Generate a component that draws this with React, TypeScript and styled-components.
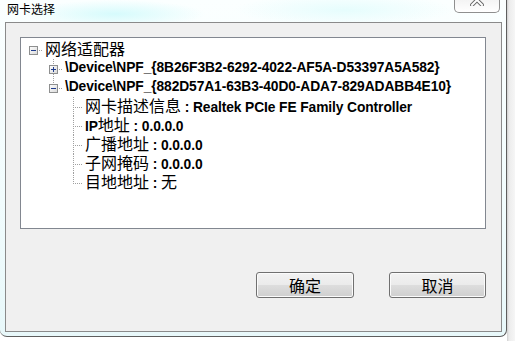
import styled, { createGlobalStyle } from "styled-components";

const GlobalStyle = createGlobalStyle`
  html, body {
    margin: 0;
    padding: 0;
    background: #ffffff;
  }
  body {
    width: 515px;
    height: 341px;
    overflow: hidden;
    font-family: "Liberation Sans", "Noto Sans CJK SC", sans-serif;
  }
`;

const Screen = styled.div`
  display: flex;
  width: 515px;
  height: 341px;
  align-items: flex-start;
`;

const Window = styled.div`
  display: flex;
  flex-direction: column;
  width: 506px;
  height: 336px;
  flex-shrink: 0;
  border-right: 1px solid #5e5e5e;
  border-bottom: 1px solid #5e5e5e;
  border-radius: 0 0 7px 7px;
  background:
    radial-gradient(ellipse 90px 14px at 115px 14px, #d6fbfc 0%, rgba(214, 251, 252, 0) 100%),
    radial-gradient(ellipse 110px 16px at 345px 10px, #e6fdfd 0%, rgba(230, 253, 253, 0) 100%),
    linear-gradient(180deg, #fbffff 0%, #f1fcfd 60%, #e8f8fa 100%);
`;

const BackStrip = styled.div`
  flex: 1;
  height: 341px;
  background: linear-gradient(90deg, #cfcfcf 0px, #ececec 2px, #f6f6f6 100%);
`;

const TitleBar = styled.div`
  display: flex;
  justify-content: space-between;
  align-items: flex-start;
  height: 22px;
  padding: 0 6px 0 7px;
`;

const Title = styled.span`
  font-family: "Noto Sans CJK SC", sans-serif;
  font-size: 12px;
  line-height: 14px;
  padding-top: 2px;
  color: #000000;
`;

const CloseButton = styled.div`
  display: flex;
  justify-content: center;
  align-items: flex-start;
  width: 44px;
  height: 12px;
  overflow: hidden;
  border: 1px solid #8f8f8f;
  border-top: none;
  border-radius: 0 0 5px 5px;
  background: linear-gradient(180deg, #f4f4f4 0%, #ffffff 100%);
  box-shadow: inset 0 -1px 0 #ffffff;
`;

const Client = styled.div`
  display: flex;
  flex-direction: column;
  margin: 0 4px 0 5px;
  height: 310px;
  box-sizing: border-box;
  border: 1px solid #8a8a8a;
  background: #f0f0f0;
  padding: 14px 14px 0 14px;
`;

const TreeBox = styled.div`
  display: flex;
  flex-direction: column;
  width: 466px;
  height: 192px;
  box-sizing: border-box;
  border: 1px solid #828790;
  background: #ffffff;
  padding: 2px 0 0 2px;
`;

const Row = styled.div`
  display: flex;
  align-items: center;
  height: 19px;
`;

const CellSvg = styled.svg`
  display: block;
  width: 20px;
  height: 19px;
  flex-shrink: 0;
  align-self: stretch;
`;

const Label = styled.span`
  display: flex;
  align-items: baseline;
  margin-left: 2px;
  margin-bottom: 2px;
  height: 17px;
  line-height: 17px;
  white-space: pre;
  color: #000000;
`;

const Cjk = styled.span`
  font-family: "Noto Sans CJK SC", sans-serif;
  font-size: 16px;
  font-weight: 400;
  line-height: 17px;
`;

const Latin = styled.span`
  font-family: "Liberation Sans", Arial, sans-serif;
  font-size: 13.8px;
  font-weight: 700;
  letter-spacing: -0.1px;
  line-height: 17px;
`;

const ButtonRow = styled.div`
  display: flex;
  justify-content: flex-end;
  gap: 35px;
  margin-top: 43px;
  padding-right: 1px;
`;

const Button = styled.button<{ $w: number }>`
  width: ${(p) => p.$w}px;
  height: 26px;
  padding: 0;
  border: 1px solid #707070;
  border-radius: 3px;
  background: linear-gradient(180deg, #f2f2f2 0%, #ebebeb 48%, #dddddd 52%, #cfcfcf 100%);
  box-shadow: inset 0 0 0 1px #fbfbfb;
  font-family: "Noto Sans CJK SC", sans-serif;
  font-size: 16px;
  line-height: 20px;
  color: #000000;
`;

type Cell =
  | "blank"
  | "pipe"
  | "tee"
  | "elbow"
  | { box: "plus" | "minus"; up?: boolean; down?: boolean };

const DOT = "#a0a0a0";

function TreeCell({ cell }: { cell: Cell }) {
  const lines: JSX.Element[] = [];
  const dash = { stroke: DOT, strokeWidth: 1, strokeDasharray: "1 1", shapeRendering: "crispEdges" as const };
  if (cell === "pipe" || cell === "tee") {
    lines.push(<line key="v" x1={10.5} y1={0} x2={10.5} y2={19} {...dash} />);
  }
  if (cell === "elbow") {
    lines.push(<line key="v" x1={10.5} y1={0} x2={10.5} y2={11} {...dash} />);
  }
  if (cell === "tee" || cell === "elbow") {
    lines.push(<line key="h" x1={12} y1={10.5} x2={20} y2={10.5} {...dash} />);
  }
  if (typeof cell === "object") {
    if (cell.up) lines.push(<line key="u" x1={10.5} y1={0} x2={10.5} y2={6} {...dash} />);
    if (cell.down) lines.push(<line key="d" x1={10.5} y1={15} x2={10.5} y2={19} {...dash} />);
    lines.push(<line key="s" x1={16} y1={10.5} x2={20} y2={10.5} {...dash} />);
    lines.push(
      <rect key="b" x={6.5} y={6.5} width={8} height={8} fill="url(#boxFill)" stroke="#8e8f8f" strokeWidth={1} shapeRendering="crispEdges" />
    );
    lines.push(<line key="m" x1={8} y1={10.5} x2={13} y2={10.5} stroke="#1f3c8c" strokeWidth={1} shapeRendering="crispEdges" />);
    if (cell.box === "plus") {
      lines.push(<line key="p" x1={10.5} y1={8} x2={10.5} y2={13} stroke="#1f3c8c" strokeWidth={1} shapeRendering="crispEdges" />);
    }
  }
  return (
    <CellSvg viewBox="0 0 20 19">
      <defs>
        <linearGradient id="boxFill" x1="0" y1="0" x2="1" y2="1">
          <stop offset="0" stopColor="#ffffff" />
          <stop offset="1" stopColor="#d8d8d8" />
        </linearGradient>
      </defs>
      {lines}
    </CellSvg>
  );
}

function Text({ value }: { value: string }) {
  const parts = value.split(/([\u4e00-\u9fff]+)/).filter((s) => s.length > 0);
  return (
    <Label>
      {parts.map((p, i) =>
        /[\u4e00-\u9fff]/.test(p) ? <Cjk key={i}>{p}</Cjk> : <Latin key={i}>{p}</Latin>
      )}
    </Label>
  );
}

const rows: { cells: Cell[]; text: string }[] = [
  { cells: [{ box: "minus" }], text: "网络适配器" },
  { cells: ["blank", { box: "plus", up: true, down: true }], text: "\\Device\\NPF_{8B26F3B2-6292-4022-AF5A-D53397A5A582}" },
  { cells: ["blank", { box: "minus", up: true }], text: "\\Device\\NPF_{882D57A1-63B3-40D0-ADA7-829ADABB4E10}" },
  { cells: ["blank", "blank", "tee"], text: "网卡描述信息 : Realtek PCIe FE Family Controller" },
  { cells: ["blank", "blank", "tee"], text: "IP地址 : 0.0.0.0" },
  { cells: ["blank", "blank", "tee"], text: "广播地址 : 0.0.0.0" },
  { cells: ["blank", "blank", "tee"], text: "子网掩码 : 0.0.0.0" },
  { cells: ["blank", "blank", "elbow"], text: "目地地址 : 无" },
];

export default function App() {
  return (
    <>
      <GlobalStyle />
      <Screen>
        <Window>
          <TitleBar>
            <Title>网卡选择</Title>
            <CloseButton>
              <svg width="14" height="12" viewBox="0 0 14 12" style={{ marginTop: -6 }}>
                <path d="M2 1 L12 11 M12 1 L2 11" stroke="#6b6b6b" strokeWidth={4} strokeLinecap="square" />
                <path d="M2 1 L12 11 M12 1 L2 11" stroke="#ffffff" strokeWidth={2} strokeLinecap="square" />
              </svg>
            </CloseButton>
          </TitleBar>
          <Client>
            <TreeBox>
              {rows.map((r, i) => (
                <Row key={i}>
                  {r.cells.map((c, j) => (
                    <TreeCell key={j} cell={c} />
                  ))}
                  <Text value={r.text} />
                </Row>
              ))}
            </TreeBox>
            <ButtonRow>
              <Button $w={98}>确定</Button>
              <Button $w={97}>取消</Button>
            </ButtonRow>
          </Client>
        </Window>
        <BackStrip />
      </Screen>
    </>
  );
}
